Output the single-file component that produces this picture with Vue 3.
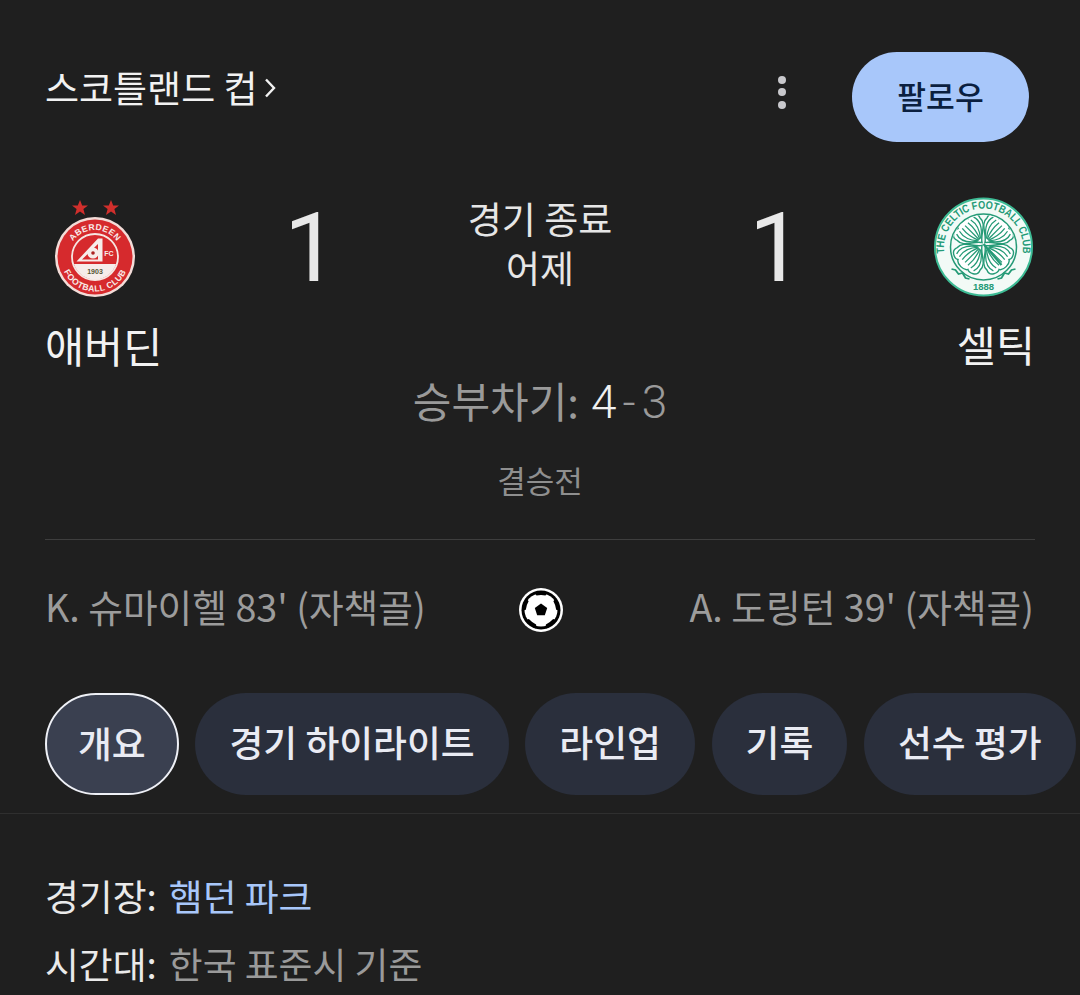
<script setup>
const tabs = [
  { label: '개요', active: true },
  { label: '경기 하이라이트' },
  { label: '라인업' },
  { label: '기록' },
  { label: '선수 평가' },
]
const leaves = [45, 135, 225, 315]
const hatch = [-12, -8, -4, 0, 4, 8, 12]
const wedges = [0, 72, 144, 216, 288]
</script>

<template>
  <main class="page">
    <header class="top">
      <div class="league">스코틀랜드 컵<svg class="chev" viewBox="0 0 12 24" width="12" height="24"><path d="M2 3.500 10 12l-8 8.500" fill="none" stroke="currentColor" stroke-width="2.400"/></svg></div>
      <div class="top-actions">
        <div class="dots"><i></i><i></i><i></i></div>
        <button class="follow"><span>팔로우</span></button>
      </div>
    </header>

    <section class="match">
      <div class="team">
        <svg class="crest-a" viewBox="0 0 80 102" width="80" height="102">
          <defs>
            <path id="aTop" d="M13 40a27 27 0 0 1 54 0" />
            <path id="aBot" d="M5.500 40a34.500 34.500 0 0 0 69 0" />
          </defs>
          <polygon fill="#d12f2c" transform="translate(25 12)" points="0,-8 2.200,-2.500 8,-2.500 3.400,1 5,7 0,3.500 -5,7 -3.400,1 -8,-2.500 -2.200,-2.500" />
          <polygon fill="#d12f2c" transform="translate(56 12)" points="0,-8 2.200,-2.500 8,-2.500 3.400,1 5,7 0,3.500 -5,7 -3.400,1 -8,-2.500 -2.200,-2.500" />
          <g transform="translate(0 21)">
            <circle cx="40" cy="40" r="40" fill="#f3dcd8" />
            <circle cx="40" cy="40" r="37.500" fill="#d62a2d" />
            <circle cx="40" cy="40" r="23" fill="#d62a2d" stroke="#f6e6e2" stroke-width="1.800" />
            <path d="M19 47h42a22 22 0 0 1-42 0z" fill="#f6ecea" />
            <path d="M21.500 44.500 43 21.500h4.500v23zM27 42.500h16V27z" fill="#f6ecea" fill-rule="evenodd" />
            <circle cx="38" cy="36" r="5.600" fill="#f6ecea" />
            <circle cx="38" cy="36" r="1.800" fill="#a22" />
            <text class="fc" x="54" y="38.500">FC</text>
            <text class="yr" x="40" y="56.500">1903</text>
            <text class="ar"><textPath href="#aTop" startOffset="50%">ABERDEEN</textPath></text>
            <text class="ar"><textPath href="#aBot" startOffset="50%">FOOTBALL CLUB</textPath></text>
          </g>
        </svg>
        <div class="name">애버딘</div>
      </div>

      <div class="score">1</div>

      <div class="status">
        <div>경기 종료</div>
        <div>어제</div>
      </div>

      <div class="score">1</div>

      <div class="team right">
        <svg class="crest-c" viewBox="0 0 100 100" width="100" height="100">
          <defs>
            <path id="cTop" d="M12 60a39.500 39.500 0 1 1 77 0" />
            <clipPath id="cInner"><circle cx="50.500" cy="50" r="32" /></clipPath>
          </defs>
          <circle cx="50.500" cy="50" r="48.500" fill="#f2faf6" stroke="#3dbb94" stroke-width="2" />
          <circle cx="50.500" cy="50" r="33" fill="#f6fbf9" stroke="#249a76" stroke-width="1.500" />
          <g clip-path="url(#cInner)">
            <g v-for="a in leaves" :key="a" :transform="`translate(50.500 47) rotate(${a})`">
              <path d="M0-2C-4-9-17-12-16-21c-3-7 6-10 9-8 2-4 12-4 14 0 3-2 12 1 9 8C17-12 4-9 0-2z" fill="#fff" stroke="#249a76" stroke-width="1.400" />
              <path v-for="h in hatch" :key="h" :d="`M${h} -26Q${h * 1.300} -16 ${h * 0.200} -6`" fill="none" stroke="#249a76" stroke-width="1.300" />
            </g>
            <path d="M50.500 47 68.500 68" stroke="#249a76" stroke-width="2.200" />
          </g>
          <path d="M18.500 72l4 1 3 4 4-1 3 5 4 1M82.500 72l-4 1-3 4-4-1-3 5-4 1" fill="none" stroke="#249a76" stroke-width="1.800" />
          <text class="cr"><textPath href="#cTop" startOffset="50%" textLength="134" lengthAdjust="spacingAndGlyphs">THE CELTIC FOOTBALL CLUB</textPath></text>
          <text class="cy" x="50.500" y="93">1888</text>
        </svg>
        <div class="name">셀틱</div>
      </div>
    </section>

    <div class="shootout">승부차기:<span class="pk"><b>4</b><span class="dash">-</span>3</span></div>
    <div class="stage">결승전</div>

    <hr class="rule" />

    <section class="scorers">
      <div class="scorer">K. 슈마이헬 83' (자책골)</div>
      <svg class="ball" viewBox="0 0 44 44" width="44" height="44">
        <circle cx="22" cy="22" r="22" fill="#fff" />
        <circle cx="22" cy="22" r="19.500" fill="#000" />
        <circle cx="22" cy="22" r="16.500" fill="#fff" />
        <path v-for="w in wedges" :key="w" :transform="`rotate(${w} 22 22)`" d="M15 4h14l-2.500 3.500q-4.500 -1 -9 0z" fill="#000" />
        <path d="M22 15.500 28.200 20 25.800 27.300h-7.600L15.800 20z" fill="#000" />
      </svg>
      <div class="scorer end">A. 도링턴 39' (자책골)</div>
    </section>

    <nav class="tabs">
      <button v-for="t in tabs" :key="t.label" class="tab" :class="{ active: t.active }">{{ t.label }}</button>
    </nav>

    <hr class="rule full" />

    <section class="info">
      <div class="row">경기장:<a class="link">햄던 파크</a></div>
      <div class="row">시간대:<span class="muted">한국 표준시 기준</span></div>
    </section>
  </main>
</template>

<style>
html, body { margin: 0; background: #1f1f1f; }
</style>

<style scoped>
.page {
  width: 1080px;
  height: 995px;
  overflow: hidden;
  box-sizing: border-box;
  background: #1f1f1f;
  color: #e8e8e8;
  font-family: "Noto Sans CJK KR", "Noto Sans", sans-serif;
}
.top {
  display: flex;
  justify-content: space-between;
  align-items: center;
  padding: 52px 51px 0 45px;
}
.league {
  display: flex;
  align-items: center;
  gap: 6px;
  font-size: 37px;
  line-height: 72px;
  margin-top: -20px;
  color: #f2f2f2;
}
.chev { margin-top: 2px; }
.top-actions { display: flex; align-items: center; gap: 66px; }
.dots { display: flex; flex-direction: column; gap: 4.500px; margin-top: -10px; }
.dots i { width: 8px; height: 8px; border-radius: 50%; background: #c8c8cc; }
.follow {
  width: 177px;
  height: 90px;
  padding: 0 0 4px;
  border: 0;
  border-radius: 45px;
  background: #a8c7fa;
  color: #0b1f3f;
  font: 500 31.300px "Noto Sans CJK KR", sans-serif;
}
.match {
  display: grid;
  grid-template-columns: 193px 146px 312px 160px 1fr;
  padding: 54px 47px 0 45px;
  height: 184px;
}
.team { display: flex; flex-direction: column; align-items: flex-start; }
.team.right { align-items: flex-end; }
.crest-a { margin: 0 0 0 10px; display: block; }
.crest-c { display: block; margin-top: 1px; }
.crest-a text, .crest-c text { font-family: "Liberation Sans", sans-serif; font-weight: 700; text-anchor: middle; }
.ar { font-size: 8.600px; fill: #f8ecea; letter-spacing: .4px; }
.fc { font-size: 7px; fill: #f8ecea; }
.yr { font-size: 7px; fill: #553; }
.cr { font-size: 11px; fill: #249a76; }
.cy { font-size: 9.500px; fill: #249a76; }
.name { font-size: 42.500px; line-height: 60px; color: #f2f2f2; margin-top: 17px; }
.team.right .name { margin-top: 17px; margin-right: -2px; }
.score {
  font: 400 96px/100px Roboto, sans-serif;
  text-align: center;
  color: #e8e8e8;
  margin-top: 2px;
}
.status {
  text-align: center;
  font-size: 37px;
  line-height: 49px;
  color: #e6e6e6;
  margin-top: -2.500px;
}
.shootout {
  margin-top: -10px;
  height: 60px;
  display: flex;
  justify-content: center;
  align-items: baseline;
  font-size: 42px;
  line-height: 60px;
  color: #9a9a9a;
}
.pk { margin-left: 12px; font-family: Roboto, sans-serif; font-weight: 300; font-size: 46px; }
.pk b { font-weight: 300; color: #f0f0f0; }
.dash { margin: 0 6px; }
.stage {
  margin-top: 28px;
  text-align: center;
  font-size: 31px;
  line-height: 44px;
  color: #8f8f8f;
}
.rule { border: 0; border-top: 1px solid #3e3e3e; margin: 37px 45px 0; }
.rule.full { margin: 18px 0 0; border-top-color: #2f2f2f; }
.scorers {
  display: flex;
  align-items: flex-start;
  padding: 43px 47px 0 45px;
  font-size: 37.700px;
  line-height: 46px;
  color: #9c9c9c;
}
.scorer { flex: 1; min-width: 0; white-space: nowrap; }
.scorer.end { text-align: right; margin-right: -1px; }
.ball { flex: none; margin: 5px 0 0 2px; }
.tabs {
  display: flex;
  gap: 16.700px;
  padding: 61px 0 0 45px;
}
.tab {
  flex: none;
  height: 102px;
  padding: 0 34px 6px;
  border: 0;
  border-radius: 51px;
  background: #2a2f3c;
  color: #e9ebf3;
  font: 500 36.800px "Noto Sans CJK KR", sans-serif;
  white-space: nowrap;
}
.tab.active {
  padding: 0 31px 4px;
  background: #3a4050;
  border: 2px solid #eef0f6;
}
.info { padding: 47px 45px 0; }
.row {
  display: flex;
  gap: 12px;
  font-size: 36.800px;
  line-height: 68px;
  color: #eaeaea;
}
.link { color: #a8c7fa; }
.muted { color: #9a9a9a; }
</style>
